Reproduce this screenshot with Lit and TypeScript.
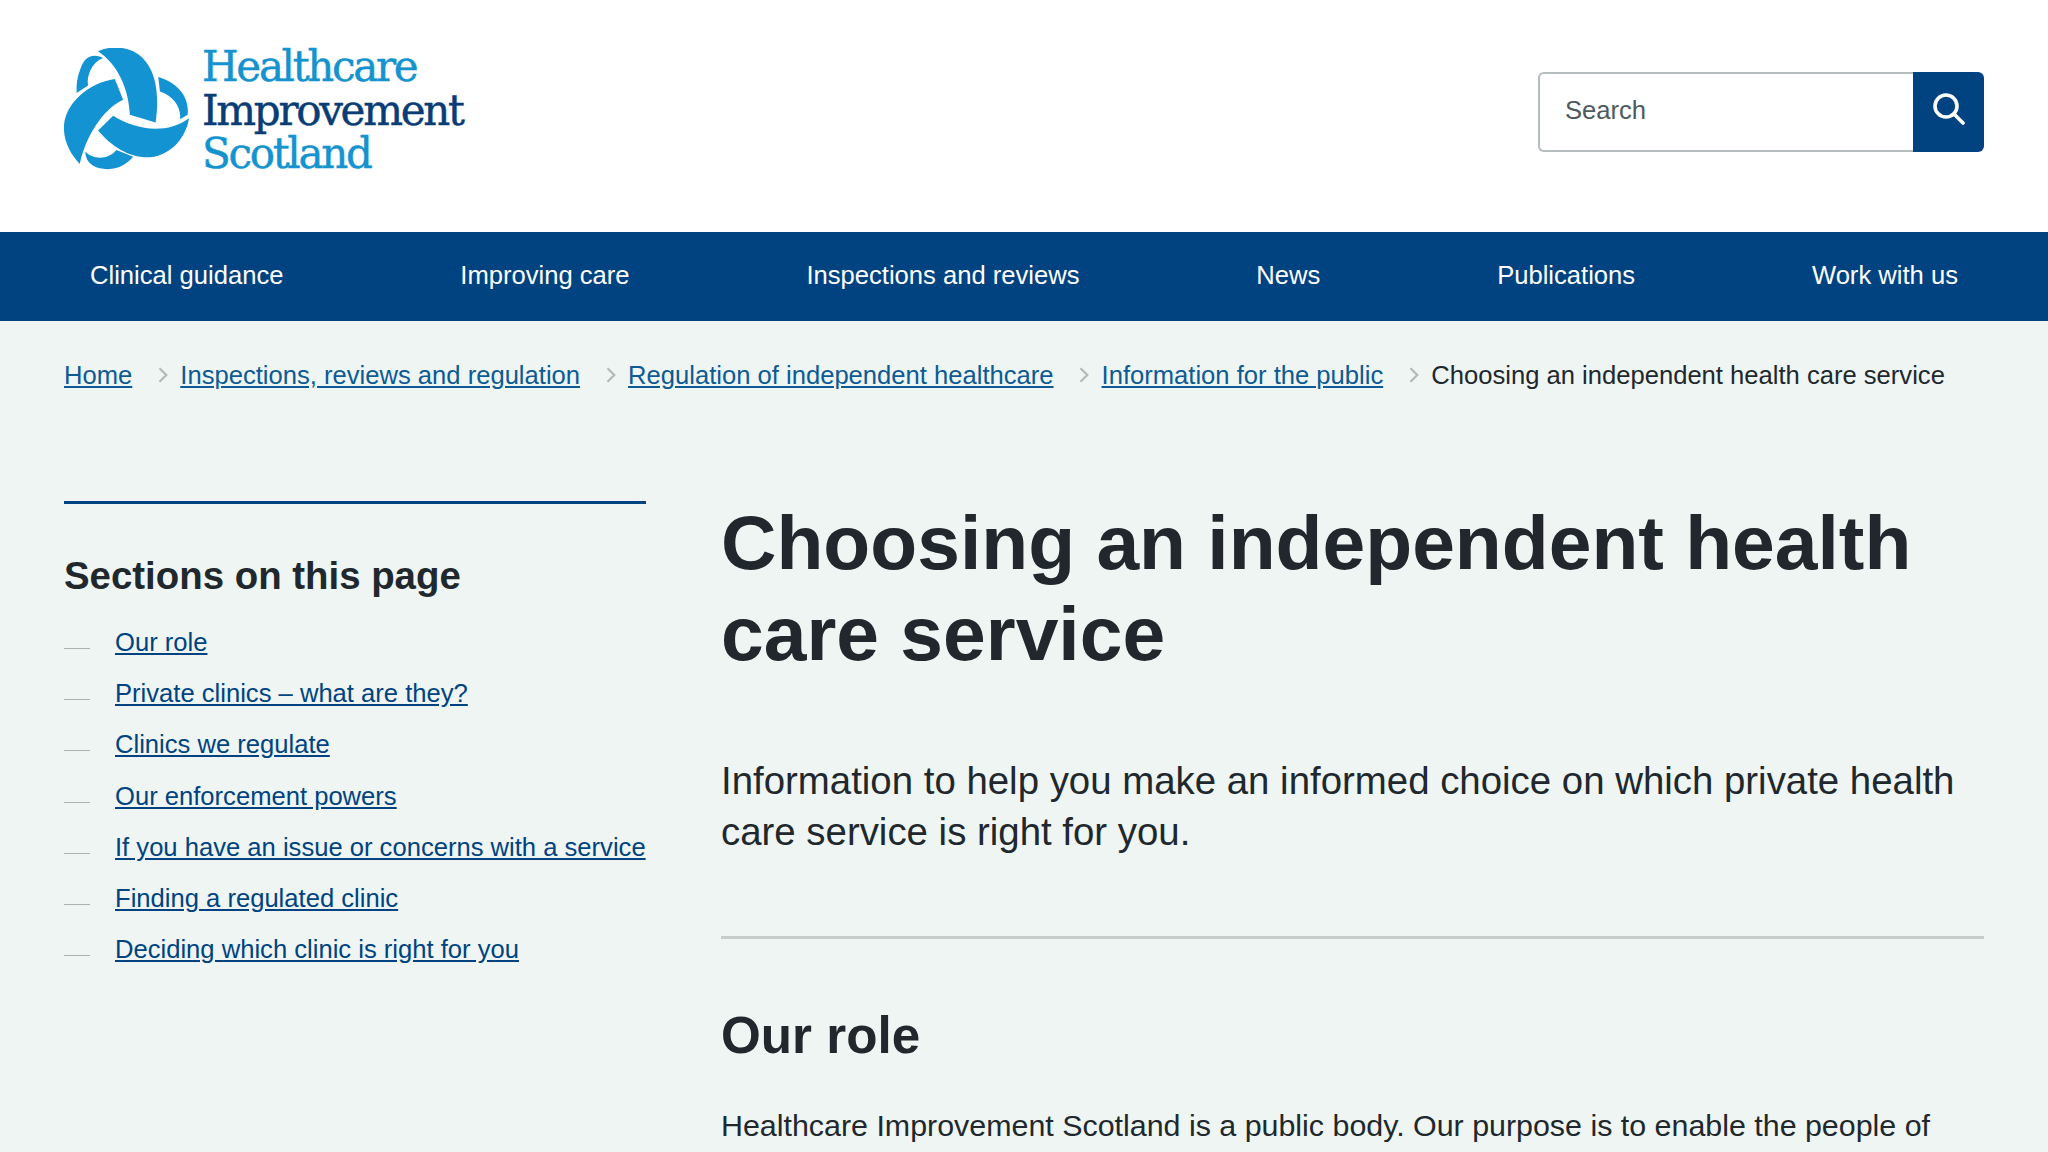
import { LitElement, html, css } from "lit";
import { customElement } from "lit/decorators.js";

const chev = html`<svg class="chev" width="10" height="16" viewBox="0 0 10 16"><path d="M1.5 1.2l6.8 6.8-6.8 6.8" fill="none" stroke="#b2baba" stroke-width="2.2"/></svg>`;

@customElement("app-root")
export class AppRoot extends LitElement {
  static styles = css`
    :host { display: block; height: 1152px; overflow: hidden; background: #eef5f3; font-family: "Liberation Sans", Arial, sans-serif; color: #21282d; }
    header { height: 232px; background: #fff; display: flex; align-items: flex-start; justify-content: space-between; padding: 48px 64px 0 64px; box-sizing: border-box; }
    .logo { display: flex; align-items: flex-start; gap: 13px; }
    .logo-text { font-family: "DejaVu Serif", serif; font-size: 42px; line-height: 43.5px; letter-spacing: -2.3px; color: #1493cf; margin-top: -3px; white-space: nowrap; -webkit-text-stroke: 0.5px currentColor; }
    .logo-text div:nth-child(2) { color: #0a3d75; }
    .search { display: flex; height: 80px; margin-top: 24px; }
    .input { width: 375px; box-sizing: border-box; border: 2px solid #b5bdbe; border-right: 0; border-radius: 6px 0 0 6px; background: #fff; padding: 0 0 3px 25px; display: flex; align-items: center; font-size: 25.6px; color: #4d5a60; }
    .btn { width: 71px; box-sizing: border-box; padding-bottom: 6px; background: #004380; border-radius: 0 6px 6px 0; display: flex; align-items: center; justify-content: center; }
    nav { height: 89px; box-sizing: border-box; background: #004380; display: flex; justify-content: space-between; align-items: center; padding: 0 90px 3px; }
    nav a { color: #fff; font-size: 25.6px; }
    .crumbs { display: flex; align-items: center; padding: 36px 64px 0; font-size: 25.6px; line-height: 36px; white-space: nowrap; }
    .crumbs a { color: #0d5a94; text-decoration: underline; }
    .chev { margin: 0 12.5px 0 25.5px; flex: none; }
    .cols { display: flex; gap: 75px; padding: 0 64px; margin-top: 108px; }
    aside { width: 582px; flex: none; border-top: 3px solid #004380; box-sizing: border-box; padding-top: 50px; height: 600px; }
    aside h2 { margin: 0 0 26px; font-size: 38.4px; line-height: 44px; font-weight: 700; }
    aside ul { list-style: none; margin: 0; padding: 0; display: flex; flex-direction: column; gap: 15.2px; }
    aside li { display: flex; font-size: 25.6px; line-height: 36px; align-items: flex-start; white-space: nowrap; }
    aside li i { width: 26px; height: 1px; background: #aab2b2; margin: 24px 25px 0 0; flex: none; }
    aside a { color: #004380; text-decoration: underline; }
    main { flex: 1; min-width: 0; }
    h1 { margin: -4px 0 0; font-size: 76.8px; line-height: 91px; font-weight: 700; }
    .lead { margin: 76px 0 0; font-size: 38.4px; line-height: 51.2px; }
    hr { border: 0; height: 3px; background: #c6cdcc; margin: 79px 0 0; }
    h2.role { margin: 67px 0 0; font-size: 51.2px; line-height: 60px; font-weight: 700; }
    p.body { margin: 36px 0 0; font-size: 30.4px; line-height: 46px; }
  `;

  render() {
    const links = ["Our role", "Private clinics – what are they?", "Clinics we regulate", "Our enforcement powers", "If you have an issue or concerns with a service", "Finding a regulated clinic", "Deciding which clinic is right for you"];
    return html`
      <header>
        <div class="logo">
          <svg width="125" height="122" viewBox="38 25 374 365">
            <g fill="#1493d2">
              <path d="M140 35C165 22 210 18 245 35C295 60 330 125 312 248L235 225C232 150 200 75 140 35Z"/>
              <path d="M155 55C125 40 100 50 88 85C78 110 74 135 76 160L110 137C105 110 120 68 155 55Z"/>
              <path d="M190 118L215 180C170 200 110 265 85 372C55 340 35 300 38 255C45 190 110 130 190 118Z"/>
              <path d="M185 228C250 270 345 285 412 235C405 285 365 345 295 352C235 355 180 320 140 272Z"/>
              <path d="M320 112C375 128 414 168 408 225L385 238C390 203 365 168 325 155Z"/>
              <path d="M102 335C125 360 170 360 195 330L245 350C215 385 175 392 145 385C115 378 102 360 102 335Z"/>
            </g>
          </svg>
          <div class="logo-text"><div>Healthcare</div><div>Improvement</div><div>Scotland</div></div>
        </div>
        <div class="search">
          <div class="input">Search</div>
          <div class="btn"><svg width="32" height="32" viewBox="0 0 32 32" fill="none" stroke="#fff" stroke-width="3.6" stroke-linecap="round"><circle cx="13" cy="13" r="11"/><path d="M21 21l9 9"/></svg></div>
        </div>
      </header>
      <nav>
        ${["Clinical guidance", "Improving care", "Inspections and reviews", "News", "Publications", "Work with us"].map((n) => html`<a>${n}</a>`)}
      </nav>
      <div class="crumbs">
        <a>Home</a>${chev}<a>Inspections, reviews and regulation</a>${chev}<a>Regulation of independent healthcare</a>${chev}<a>Information for the public</a>${chev}<span>Choosing an independent health care service</span>
      </div>
      <div class="cols">
        <aside>
          <h2>Sections on this page</h2>
          <ul>${links.map((l) => html`<li><i></i><a>${l}</a></li>`)}</ul>
        </aside>
        <main>
          <h1>Choosing an independent health care service</h1>
          <p class="lead">Information to help you make an informed choice on which private health care service is right for you.</p>
          <hr />
          <h2 class="role">Our role</h2>
          <p class="body">Healthcare Improvement Scotland is a public body. Our purpose is to enable the people of Scotland to experience the best quality of health and social care.</p>
        </main>
      </div>
    `;
  }
}
